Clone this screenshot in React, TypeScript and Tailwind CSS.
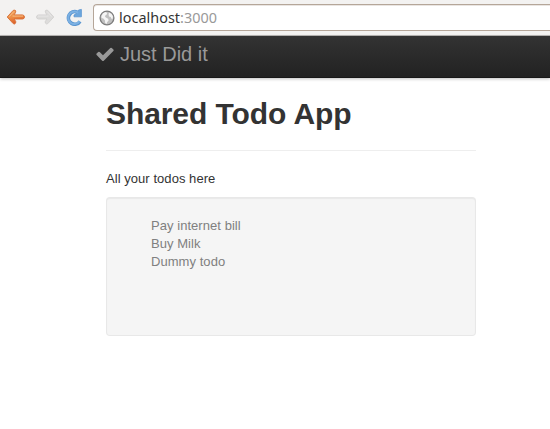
import React from "react";

function BackArrow() {
  return (
    <svg width="20" height="18" viewBox="0 0 20 18" className="shrink-0">
      <defs>
        <linearGradient id="back" x1="0" y1="0" x2="0.3" y2="1">
          <stop offset="0" stopColor="#f3a965" />
          <stop offset="0.55" stopColor="#ec8d45" />
          <stop offset="1" stopColor="#dc5f2a" />
        </linearGradient>
      </defs>
      <path d="M1.2 9 7.2 2.4Q9.2 1.4 9.8 3L9.4 4.8 8 6.9H16.5Q18.5 7.2 18.5 9T16.5 11H8L9.7 13.3Q10.2 15.4 8.7 16L7.2 15.6Z" fill="url(#back)" stroke="#d66d33" strokeWidth="0.9" strokeLinejoin="round" />
      <path d="M3.2 8.7 7.9 3.6M6.5 8.1H17" stroke="#f7bd84" strokeWidth="0.9" fill="none" />
    </svg>
  );
}

function ForwardArrow() {
  return (
    <svg width="20" height="18" viewBox="0 0 20 18" className="shrink-0">
      <path d="M18.8 9 12.8 2.4Q10.8 1.4 10.2 3L10.6 4.8 12 6.9H3.5Q1.5 7.2 1.5 9T3.5 11H12L10.3 13.3Q9.8 15.4 11.3 16L12.8 15.6Z" fill="#dddcdb" stroke="#cfcecd" strokeWidth="0.8" strokeLinejoin="round" />
      <path d="M3 8.1H13.5M12.1 3.6 16.6 8.7" stroke="#e8e7e6" strokeWidth="0.9" fill="none" />
    </svg>
  );
}

function Reload() {
  return (
    <svg width="18" height="18" viewBox="0 0 18 18" className="shrink-0">
      <path d="M15 13.4A6.3 6.3 0 1 1 12.2 4.1" fill="none" stroke="#5a95d0" strokeWidth="3.6" />
      <path d="M16.4 1.4V8.8H9V7L11.4 5.6 13.5 2Z" fill="#6ca6dd" stroke="#5a95d0" strokeWidth="0.8" strokeLinejoin="round" />
      <path d="M14.6 13.1A6.2 6.2 0 1 1 13 4.8" fill="none" stroke="#7cb1e3" strokeWidth="2" />
    </svg>
  );
}

function Globe() {
  return (
    <svg width="16" height="16" viewBox="0 0 16 16" className="shrink-0">
      <circle cx="8" cy="8" r="6.9" fill="#c0c0c0" stroke="#7d7d7d" strokeWidth="1.3" />
      <path d="M2.5 6 4 3.2 6.5 2 8.2 3 7.5 4.8 5.8 6 6.8 7.5 9.2 8.8 9.6 10.6 8 12.2 7.6 14 6.2 13 6 10.4 4.3 8.6 2.6 8Z" fill="#f5f5f5" />
      <path d="M10 2.6 12.6 4 13.9 6.5 13.6 9 12.2 8.6 11.8 7 10 6.4 9.6 4.6Z" fill="#f5f5f5" />
    </svg>
  );
}

function BrowserBar() {
  return (
    <div className="flex h-9 items-start border-b border-[#b9b7b5] bg-[#f3f2f1]">
      <div className="flex shrink-0 items-center pt-2 pl-[6px]">
        <BackArrow />
        <div className="ml-[9px] flex"><ForwardArrow /></div>
        <div className="ml-[10px] flex"><Reload /></div>
      </div>
      <div className="mt-1 ml-[10px] flex h-[27px] flex-1 items-center rounded-l-[4px] border border-r-0 border-[#b5a699] bg-white pl-[5px] shadow-[inset_0_1px_0_#e9e5e2]">
        <Globe />
        <span className="ml-[4px] font-['Noto_Sans',sans-serif] text-[14.4px] leading-[24px] tracking-[0.03px] text-[#333]">
          localhost<span className="text-[#999]">:3000</span>
        </span>
      </div>
    </div>
  );
}

function Navbar() {
  return (
    <div className="flex h-[42px] items-start border-b border-[#181818] bg-linear-to-b from-[#333] to-[#222] pl-[95px] text-[#999] shadow-[0_1px_3px_rgba(0,0,0,0.25)]">
      <svg width="20" height="20" viewBox="0 0 1792 1792" className="mt-2 shrink-0" fill="currentColor">
        <path d="M1671 566q0 40-28 68l-724 724-136 136q-28 28-68 28t-68-28l-136-136-362-362q-28-28-28-68t28-68l136-136q28-28 68-28t68 28l294 295 656-657q28-28 68-28t68 28l136 136q28 28 28 68z" />
      </svg>
      <span className="mt-2 ml-[5px] text-[20px] leading-5 tracking-normal">Just Did it</span>
    </div>
  );
}

const todos = ["Pay internet bill", "Buy Milk", "Dummy todo"];

export default function App() {
  return (
    <div className="h-[429px] overflow-hidden bg-white font-['Liberation_Sans',Arial,sans-serif] text-[13px] leading-[18px] tracking-[0.05px] text-[#333]">
      <BrowserBar />
      <Navbar />
      <main className="ml-[106px] w-[370px] pt-[18px]">
        <h1 className="text-[30px] leading-9 font-bold tracking-[-0.08px]">Shared Todo App</h1>
        <hr className="mt-[18px] border-[#eee]" />
        <p className="mt-[19px]">All your todos here</p>
        <div className="mt-[9px] h-[139px] rounded-[4px] border border-black/5 bg-[#f5f5f5] pt-[19px] pl-11 text-[#808080] shadow-[inset_0_1px_1px_rgba(0,0,0,0.05)]">
          <ul>
            {todos.map((todo) => (
              <li key={todo}>{todo}</li>
            ))}
          </ul>
        </div>
      </main>
    </div>
  );
}
